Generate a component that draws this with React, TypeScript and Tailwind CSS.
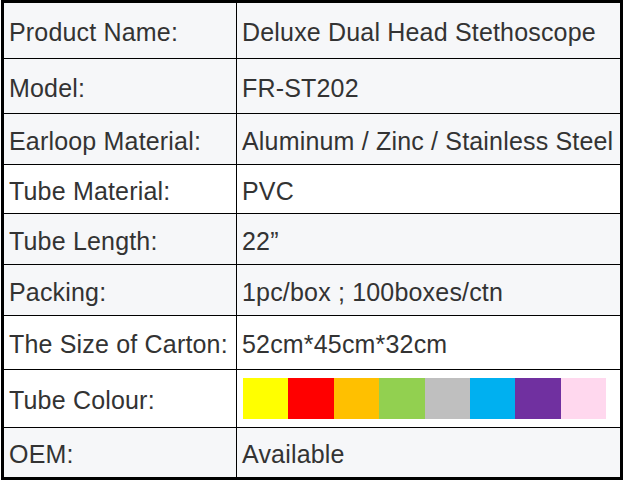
const rows: { label: string; value?: string; h: string; bg: string }[] = [
  { label: 'Product Name:', value: 'Deluxe Dual Head Stethoscope', h: 'h-[56px]', bg: 'bg-[#f6f7f9]' },
  { label: 'Model:', value: 'FR-ST202', h: 'h-[55px]', bg: 'bg-[#f6f7f9]' },
  { label: 'Earloop Material:', value: 'Aluminum / Zinc / Stainless Steel', h: 'h-[51px]', bg: 'bg-[#f6f7f9]' },
  { label: 'Tube Material:', value: 'PVC', h: 'h-[49px]', bg: 'bg-white' },
  { label: 'Tube Length:', value: '22\u201d', h: 'h-[51px]', bg: 'bg-[#f6f7f9]' },
  { label: 'Packing:', value: '1pc/box ; 100boxes/ctn', h: 'h-[51px]', bg: 'bg-[#f6f7f9]' },
  { label: 'The Size of Carton:', value: '52cm*45cm*32cm', h: 'h-[54px]', bg: 'bg-white' },
  { label: 'Tube Colour:', h: 'h-[58px]', bg: 'bg-white' },
  { label: 'OEM:', value: 'Available', h: 'h-[49px]', bg: 'bg-[#f6f7f9]' },
];

const swatches = ['bg-[#ffff00]', 'bg-[#ff0000]', 'bg-[#ffc000]', 'bg-[#92d050]', 'bg-[#bfbfbf]', 'bg-[#00b0f0]', 'bg-[#7030a0]', 'bg-[#ffd8ee]'];

export default function App() {
  return (
    <div className="w-[626px] h-[482px] bg-white" style={{ fontFamily: '"Liberation Sans", Arial, sans-serif' }}>
      <div className="ml-[1px] w-[622px] border-[3px] border-black text-[25px] tracking-[0.18px] text-[#333333] leading-none">
        {rows.map((r, i) => (
          <div
            key={r.label}
            className={`grid grid-cols-[233px_1fr] ${r.h} ${r.bg} ${i < rows.length - 1 ? 'border-b border-black' : ''}`}
          >
            <div className="flex items-center pl-[5px] pt-[4px] border-r border-black whitespace-nowrap">{r.label}</div>
            <div className="flex items-center pl-[5px] whitespace-nowrap">
              {r.value ? (
                <span className="pt-[4px]">{r.value}</span>
              ) : (
                <div className="flex w-[363px] h-[41px] ml-[1px]">
                  {swatches.map((s) => (
                    <div key={s} className={`flex-1 ${s}`} />
                  ))}
                </div>
              )}
            </div>
          </div>
        ))}
      </div>
    </div>
  );
}
